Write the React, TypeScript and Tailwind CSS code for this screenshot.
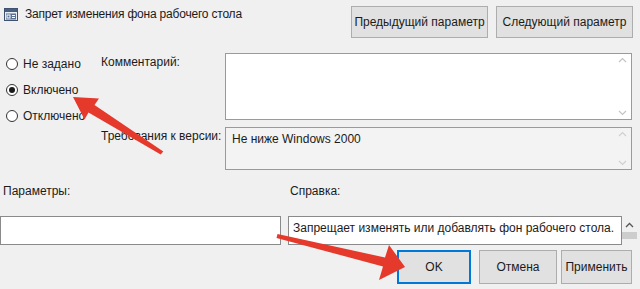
import React from "react";

function PolicyIcon() {
  return (
    <svg width="14" height="13" viewBox="0 0 14 13">
      <rect x="0.5" y="0.5" width="13" height="12" fill="#e8edf3" stroke="#3d5270" />
      <rect x="1" y="1" width="12" height="3" fill="#4a5f7e" />
      <rect x="2" y="5.5" width="10" height="6" fill="#5b7193" />
      <rect x="3" y="7" width="3" height="3" fill="none" stroke="#fff" strokeWidth="1" />
      <rect x="8" y="7" width="3" height="1" fill="#fff" />
      <rect x="8" y="9" width="3" height="1" fill="#fff" />
    </svg>
  );
}

function Radio({ label, checked }: { label: string; checked?: boolean }) {
  return (
    <div className="flex h-[22px] items-center gap-[5px]">
      <span className="flex h-[12px] w-[12px] items-center justify-center rounded-full border border-[#333] bg-white">
        {checked && <span className="h-[6px] w-[6px] rounded-full bg-[#1a1a1a]" />}
      </span>
      <span>{label}</span>
    </div>
  );
}

function ScrollStrip({ light }: { light?: boolean }) {
  return (
    <div className="flex w-[17px] flex-col items-center justify-between py-[3px]">
      <svg width="9" height="6" viewBox="0 0 9 6">
        <path d="M1 5 L4.5 1.5 L8 5" fill="none" stroke={light ? "#d0d0d0" : "#c4c4c4"} strokeWidth="1.2" />
      </svg>
      <svg width="9" height="6" viewBox="0 0 9 6">
        <path d="M1 1 L4.5 4.5 L8 1" fill="none" stroke={light ? "#d0d0d0" : "#c4c4c4"} strokeWidth="1.2" />
      </svg>
    </div>
  );
}

function WinButton({ children, className }: { children: React.ReactNode; className: string }) {
  return (
    <div className={`flex items-center justify-center whitespace-nowrap bg-[#e1e1e1] ${className}`}>{children}</div>
  );
}

export default function App() {
  return (
    <div
      className="relative h-[289px] w-[640px] overflow-hidden whitespace-nowrap bg-[#f0f0f0] text-[12px] leading-[16px] text-[#1b1b1b]"
      style={{ fontFamily: '"Liberation Sans", Arial, sans-serif' }}
    >
      {/* header */}
      <div className="flex items-start justify-between pt-[6px] pr-[7px]">
        <div className="flex items-center gap-[7px] pl-[4px]">
          <PolicyIcon />
          <span className="tracking-[-0.2px]">Запрет изменения фона рабочего стола</span>
        </div>
        <div className="flex gap-[8px]">
          <WinButton className="h-[32px] w-[137px] border border-[#adadad]">Предыдущий параметр</WinButton>
          <WinButton className="h-[32px] w-[137px] border border-[#adadad]">Следующий параметр</WinButton>
        </div>
      </div>

      {/* state + comment/version */}
      <div className="mt-[15px] flex">
        <div className="flex w-[101px] flex-col gap-[4px] pl-[6px]">
          <Radio label="Не задано" />
          <Radio label="Включено" checked />
          <Radio label="Отключено" />
        </div>
        <div className="flex flex-col gap-[7px]">
          <div className="flex">
            <div className="w-[124px] pt-[1px]">Комментарий:</div>
            <div className="flex h-[67px] w-[407px] border border-[#9a9a9a] bg-white">
              <div className="flex-1" />
              <ScrollStrip />
            </div>
          </div>
          <div className="flex">
            <div className="w-[124px] pt-[1px]">Требования к версии:</div>
            <div className="flex h-[43px] w-[407px] border border-[#9a9a9a] bg-[#f3f3f3]">
              <div className="flex-1 pl-[6px] pt-[3px]">Не ниже Windows 2000</div>
              <ScrollStrip light />
            </div>
          </div>
        </div>
      </div>

      {/* options / help */}
      <div className="mt-[13px] flex">
        <div className="flex w-[288px] flex-col">
          <div className="pl-[3px]">Параметры:</div>
          <div className="mt-[17px] h-[29px] w-[281px] border border-[#8a8a8a] bg-white" />
        </div>
        <div className="flex flex-col">
          <div className="pl-[2px]">Справка:</div>
          <div className="mt-[17px] flex">
            <div className="h-[29px] w-[334px] border border-[#8a8a8a] bg-white pl-[4px] pt-[3px]">
              Запрещает изменять или добавлять фон рабочего стола.
            </div>
            <div className="flex w-[15px] flex-col items-center pt-[6px]">
              <svg width="9" height="6" viewBox="0 0 9 6">
                <path d="M1 5 L4.5 1.5 L8 5" fill="none" stroke="#555" strokeWidth="1.3" />
              </svg>
              <div className="mt-[4px] h-[7px] w-[15px] bg-[#cdcdcd]" />
            </div>
          </div>
        </div>
      </div>

      {/* dialog buttons */}
      <div className="mt-[5px] flex justify-end pr-[8px]">
        <WinButton className="h-[34px] w-[74px] border-2 border-[#0078d7]">OK</WinButton>
        <WinButton className="ml-[8px] h-[34px] w-[78px] border border-[#adadad]">Отмена</WinButton>
        <WinButton className="ml-[4px] h-[34px] w-[71px] border border-[#adadad]">Применить</WinButton>
      </div>

      {/* red annotation arrows */}
      <svg className="pointer-events-none absolute left-0 top-0" width="640" height="289" viewBox="0 0 640 289">
        <polygon
          fill="#e5392c"
          points="73,97 99,98.5 94.5,105 163.3,151.4 160.7,154.6 88.5,112.5 84.5,119.5"
        />
        <polygon
          fill="#e5392c"
          points="405,267 379,280 383,266.5 276.5,237.9 277.5,234.1 385,257.5 389,245"
        />
      </svg>
    </div>
  );
}
